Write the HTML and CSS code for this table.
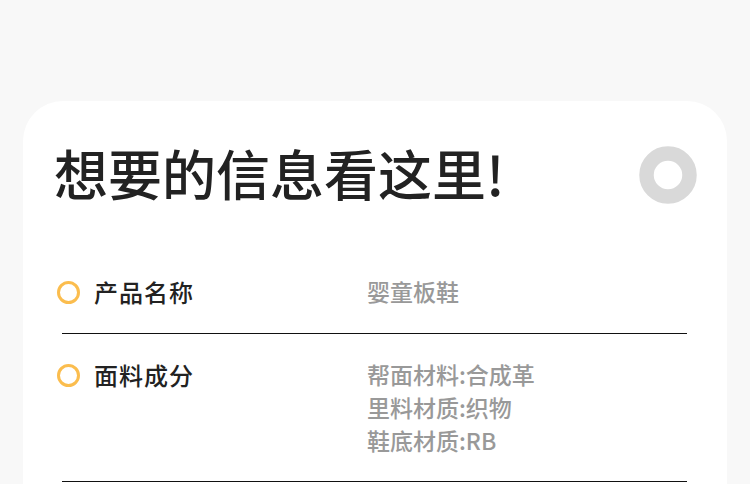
FILE: index.html
```html
<!DOCTYPE html>
<html lang="zh-CN">
<head>
<meta charset="utf-8">
<title>信息</title>
<link rel="stylesheet" href="styles.css">
</head>
<body>
<div class="card">
  <div class="header">
    <h1 class="title">想要的信息看这里!</h1>
    <svg class="deco" width="58" height="58" viewBox="0 0 58 58"><circle cx="29" cy="29" r="21.5" fill="none" stroke="#d9d9d9" stroke-width="14.5"/></svg>
  </div>
  <div class="list">
    <div class="row">
      <div class="label"><span class="dot"></span><span>产品名称</span></div>
      <div class="value">婴童板鞋</div>
    </div>
    <div class="row">
      <div class="label"><span class="dot"></span><span>面料成分</span></div>
      <div class="value">帮面材料:合成革<br>里料材质:织物<br>鞋底材质:RB</div>
    </div>
  </div>
</div>
</body>
</html>
```
FILE: styles.css
```css
html, body {
  margin: 0;
  padding: 0;
  background: #f8f8f8;
  font-family: "Noto Sans CJK SC", "Noto Sans", sans-serif;
}
body {
  padding-top: 101px;
  height: 484px;
  box-sizing: border-box;
  overflow: hidden;
}
.card {
  margin: 0 23px;
  background: #fff;
  border-radius: 40px 40px 0 0;
  height: 383px;
  overflow: hidden;
}
.header {
  display: flex;
  align-items: center;
  justify-content: space-between;
  padding: 35px 30px 0 31px;
  height: 74px;
}
.title {
  margin: 0;
  font-size: 54px;
  line-height: 74px;
  font-weight: 500;
  color: #222;
}
.deco {
  display: block;
  margin-top: 4px;
}
.list {
  margin: 41px 40px 0 39px;
}
.row {
  display: flex;
  align-items: flex-start;
  padding: 24px 0 25px;
  border-bottom: 1px solid #111;
}
.row + .row {
  padding-bottom: 24px;
}
.label {
  display: flex;
  align-items: center;
  width: 310px;
  margin-left: -5px;
  font-size: 24px;
  line-height: 33px;
  font-weight: 500;
  letter-spacing: 1px;
  color: #222;
}
.dot {
  width: 17px;
  height: 17px;
  border: 3.5px solid #fbbd4e;
  border-radius: 50%;
  margin-right: 14px;
  margin-top: 2px;
  flex: none;
}
.value {
  font-size: 23px;
  line-height: 33px;
  font-weight: 500;
  color: #999;
}
```
